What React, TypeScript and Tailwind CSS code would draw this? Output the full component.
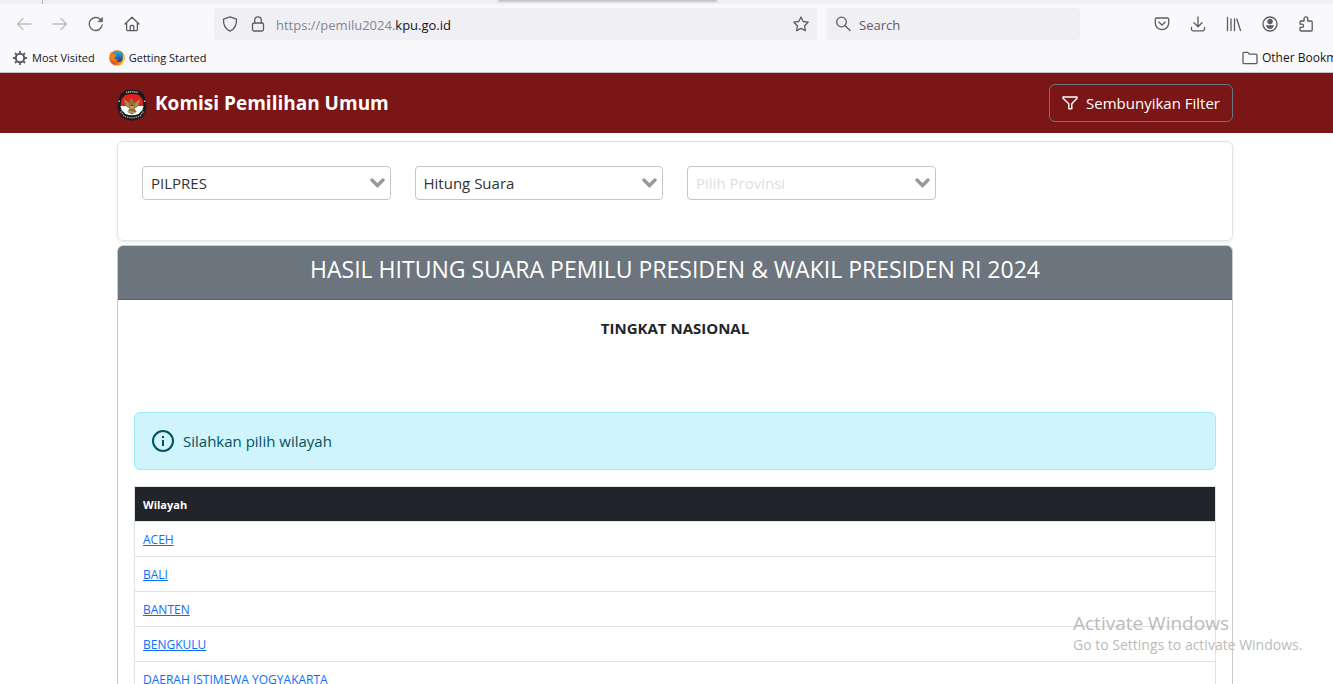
import React from 'react';

interface FilterSelectProps {
  id: string;
  label: string;
  options: string[];
  muted?: boolean;
}

const REGIONS = [
  'ACEH',
  'BALI',
  'BANTEN',
  'BENGKULU',
  'DAERAH ISTIMEWA YOGYAKARTA',
];

const Icon = ({ size = 16, children }: { size?: number; children: React.ReactNode }) => (
  <svg width={size} height={size} viewBox="0 0 16 16" fill="none" stroke="currentColor" strokeWidth="1.3" strokeLinecap="round" strokeLinejoin="round" aria-hidden="true">
    {children}
  </svg>
);

const ToolbarButton = ({ label, disabled, children }: { label: string; disabled?: boolean; children: React.ReactNode }) => (
  <button aria-label={label} disabled={disabled} className="flex h-8 w-9 items-center justify-center text-[#5b5b66] disabled:text-[#bcbcc2]">
    {children}
  </button>
);

const FirefoxLogo = () => (
  <svg width="16" height="16" viewBox="0 0 16 16" aria-hidden="true">
    <defs>
      <linearGradient id="fox" x1="0" y1="0" x2="1" y2="1">
        <stop offset="0" stopColor="#f08a1c" />
        <stop offset="0.55" stopColor="#e5541b" />
        <stop offset="1" stopColor="#f9c22e" />
      </linearGradient>
      <linearGradient id="globe" x1="0" y1="0" x2="0" y2="1">
        <stop offset="0" stopColor="#35b5ea" />
        <stop offset="1" stopColor="#153a78" />
      </linearGradient>
    </defs>
    <circle cx="8" cy="8" r="7.8" fill="url(#fox)" />
    <path d="M3.5 2.2A7.6 7.6 0 0 1 13.6 3c1.2 2.2 1.4 5-.2 7.2-1.6 1.8-4.6 2.2-6.600.8L5 9l2-2.600-2.400-.6z" fill="url(#globe)" />
    <path d="M.6 5.500 1.800 2l1.600 1.700c1-.3 2-.1 2.800.4L7.600 5.600 6 7l-.6 1.400c.8 1.300 2.600 1.200 3.800.5-.4 2.200-3.200 3.200-5.200 1.800C2 9.600.8 7.600.6 5.500z" fill="#ef7f1a" />
    <path d="M13.300 3.200c2.200 2.400 2.800 6 1.200 9-.8 1.400-2 2.500-3.500 3.100 2.600-2.800 3.600-7.600 2.300-12.100z" fill="#fbd13c" />
  </svg>
);

const KpuLogo = () => (
  <svg width="30" height="32" viewBox="0 0 30 32" aria-hidden="true">
    <path d="M8 1.500Q15-.2 22 1.500L26.500 5Q30 12 29.500 20L26 27.500Q20 31.500 15 31.500T4 27.500L.5 20Q0 12 3.500 5z" fill="#17191b" />
    <path d="M8 6Q15 4 22 6L25.500 10 26.500 17H3.500L4.500 10z" fill="#e3211c" />
    <path d="M3.500 17h23L25.500 21 21.500 25Q15 27.500 8.500 25L4.500 21z" fill="#fff" />
    <path d="M9 3.500Q15 2 21 3.500" fill="none" stroke="#b9b9b9" strokeWidth="1.600" strokeDasharray="1.200 .7" />
    <path d="M3.500 22.500 7 27Q15 30.500 23 27L26.500 22.500" fill="none" stroke="#a5a5a5" strokeWidth="1.500" strokeDasharray="1.300 .9" />
    <path d="M2.200 11.500v1.500M27.800 11.500v1.500" stroke="#ddd" strokeWidth="1.200" />
    <path d="m6.500 9 1 6 3 3.500 2 .5-2 4 4.500 2.500 4.500-2.500-2-4 2-.5 3-3.500 1-6-3.500 3-3 1.500-1-3-2-1-1.500 1 .5 3-3-1.500z" fill="#92713d" />
    <path d="m8 12 3.500 3M22 12l-3.500 3M9 15l3 2M21 15l-3 2M11 22.500l8 1.500" stroke="#d9be83" strokeWidth=".8" />
    <path d="M13 15h4v3.500l-2 1.500-2-1.500z" fill="#c9a35a" />
    <path d="M13.500 15.500h3v1.500h-3z" fill="#5b2b1c" />
  </svg>
);

const FilterSelect: React.FC<FilterSelectProps> = ({ id, label, options, muted }) => (
  <div className="relative">
    <select
      id={id}
      aria-label={label}
      className={`block h-[34px] w-full appearance-none rounded border border-[#c6c6c6] bg-white pl-2 pr-8 text-[15px] ${muted ? 'text-[#dedede]' : 'text-[#333]'}`}
    >
      {options.map(option => (
        <option key={option}>{option}</option>
      ))}
    </select>
    <svg className="pointer-events-none absolute right-1.5 top-3" width="15" height="10" viewBox="0 0 15 10" fill="none" aria-hidden="true">
      <path d="m2 2 5.500 5.500L13 2" stroke="#999" strokeWidth="3.400" strokeLinecap="round" />
    </svg>
  </div>
);

const BrowserChrome = () => (
  <div className="shrink-0 border-b border-[#c4c4ca] bg-[#f9f9fb]">
    <div className="flex h-1 bg-[#f0f0f4]">
      <div className="w-[43px] border-r border-[#b4b4ba]" />
      <div className="ml-[456px] h-px w-[217px] bg-[#c4c4c6] shadow-[0_0_2px_1px_#c4c4c6]" />
    </div>
    <div className="flex h-10 items-center pl-1.5 pr-[9px]">
      <ToolbarButton label="Back" disabled>
        <Icon><path d="M15 8H1.500M7 2.500 1.500 8 7 13.500" /></Icon>
      </ToolbarButton>
      <ToolbarButton label="Forward" disabled>
        <Icon><path d="M1 8h13.500M9 2.500 14.500 8 9 13.500" /></Icon>
      </ToolbarButton>
      <ToolbarButton label="Reload">
        <Icon>
          <path d="M14.200 9A6.500 6.500 0 1 1 12.500 3.500" />
          <path d="M14.500 1.500v4.300h-4.300z" fill="currentColor" strokeWidth=".6" />
        </Icon>
      </ToolbarButton>
      <ToolbarButton label="Home">
        <Icon>
          <path d="M1 8 8 1.200 15 8M2.600 6.800V13.500a1.200 1.200 0 0 0 1.200 1.200h8.400a1.200 1.200 0 0 0 1.200-1.200V6.800" />
          <path d="M6.200 14.500v-3.800a1.200 1.200 0 0 1 1.200-1.200h1.200a1.200 1.200 0 0 1 1.200 1.200v3.800" />
        </Icon>
      </ToolbarButton>
      <div className="ml-16 flex h-8 flex-1 items-center rounded bg-[#f0f0f4] px-2 text-[#5b5b66]">
        <Icon><path d="M8 .8 14.500 3.200c.3 4.800-1.500 9.500-6.500 12-5-2.500-6.800-7.200-6.500-12z" /></Icon>
        <span className="ml-3">
          <Icon>
            <rect x="2.500" y="7" width="11" height="8" rx="1.500" />
            <path d="M4.700 7V4.200a3.300 3.300 0 0 1 6.600 0V7" />
          </Icon>
        </span>
        <div className="ml-2.5 flex-1 pt-[3px] text-[13px] text-[#85858c]">
          https://pemilu2024.<span className="text-[#15141a]">kpu.go.id</span>
        </div>
        <button aria-label="Bookmark this page">
          <Icon><path d="m8 1 2.200 4.500 4.900.7-3.500 3.500.8 4.900L8 12.300l-4.400 2.300.8-4.900L.9 6.200l4.900-.7z" /></Icon>
        </button>
      </div>
      <div className="ml-2.5 flex h-8 w-[253px] items-center gap-2 rounded bg-[#f0f0f4] pl-2 text-[#5b5b66]">
        <span className="shrink-0">
          <Icon>
            <circle cx="6.500" cy="6" r="4.800" />
            <path d="m10 9.500 5 5" />
          </Icon>
        </span>
        <input type="search" aria-label="Search" placeholder="Search" className="w-full bg-transparent pt-[3px] text-[13px] placeholder:text-[#5b5b66]" />
      </div>
      <div className="ml-16 flex">
        <ToolbarButton label="Pocket">
          <Icon>
            <path d="M2.500 2h11a1.200 1.200 0 0 1 1.200 1.200V7a6.700 6.700 0 0 1-13.400 0V3.200A1.200 1.200 0 0 1 2.500 2z" />
            <path d="M4.800 6 8 9l3.200-3" />
          </Icon>
        </ToolbarButton>
        <ToolbarButton label="Downloads">
          <Icon><path d="M8 .8v9.700M4 6.800l4 4 4-4M1.500 11.500v1.800a1.500 1.500 0 0 0 1.500 1.500h10a1.500 1.500 0 0 0 1.500-1.500v-1.800" /></Icon>
        </ToolbarButton>
        <ToolbarButton label="Library">
          <Icon><path d="M1.500 1.500v13M5 3v11.500M8.500 3v11.500M10.800 3l3.700 11.500" /></Icon>
        </ToolbarButton>
        <ToolbarButton label="Account">
          <Icon>
            <circle cx="8" cy="8" r="7" />
            <circle cx="8" cy="5.600" r="2.100" fill="currentColor" />
            <path d="M4.500 9.500h7c-.2 2.200-1.600 3.200-3.500 3.200s-3.300-1-3.500-3.200z" fill="currentColor" strokeWidth=".5" />
          </Icon>
        </ToolbarButton>
        <ToolbarButton label="Extensions">
          <Icon><path d="M6 5V2.700a1.900 1.900 0 0 1 3.800 0V5h3.400a1 1 0 0 1 1 1v8a1 1 0 0 1-1 1H3a1 1 0 0 1-1-1v-2.600h2a1.600 1.600 0 0 0 0-3.200H2V6a1 1 0 0 1 1-1z" /></Icon>
        </ToolbarButton>
      </div>
    </div>
    <div className="flex h-7 items-center gap-3.5 overflow-hidden whitespace-nowrap pl-3 text-[11px] text-[#15141a]">
      <a href="#" className="flex items-center gap-1">
        <svg width="16" height="16" viewBox="0 0 16 16" fill="none" stroke="#5b5b66" aria-hidden="true">
          <circle cx="8" cy="8" r="4.200" strokeWidth="2" />
          <path d="M8 1v2.500M8 12.500V15M1 8h2.500M12.500 8H15M3 3l1.800 1.800M11.200 11.200 13 13M13 3l-1.800 1.800M4.800 11.200 3 13" strokeWidth="1.800" />
        </svg>
        Most Visited
      </a>
      <a href="#" className="flex items-center gap-1">
        <FirefoxLogo />
        Getting Started
      </a>
      <a href="#" className="ml-auto flex w-[91px] shrink-0 items-center gap-1">
        <span className="shrink-0 text-[#5b5b66]">
          <Icon><path d="M1 12.500v-9A1.200 1.200 0 0 1 2.200 2.300h3.600l1.500 1.900h6.500A1.200 1.200 0 0 1 15 5.400v7.100a1.200 1.200 0 0 1-1.200 1.200H2.200A1.200 1.200 0 0 1 1 12.500z" /></Icon>
        </span>
        <span className="text-[12px]">Other Bookm</span>
      </a>
    </div>
  </div>
);

const Header = () => (
  <header className="bg-[#7a1616] pl-[17px] text-white">
    <div className="mx-auto flex h-[60px] max-w-[1116px] items-center justify-between">
      <a href="#" className="flex items-center gap-2 text-[19px] font-bold">
        <span className="pt-1">
          <KpuLogo />
        </span>
        Komisi Pemilihan Umum
      </a>
      <button className="flex h-[38px] items-center gap-2 rounded-md border border-[#6c757d] px-3 text-[15px]">
        <svg width="16" height="16" viewBox="0 0 16 16" fill="none" stroke="currentColor" strokeWidth="1.400" strokeLinejoin="round" aria-hidden="true">
          <path d="M1 2h14v1.300l-5.200 5.500v4.900H6.800V8.800L1 3.300z" />
        </svg>
        Sembunyikan Filter
      </button>
    </div>
  </header>
);

export default function App() {
  return (
    <div className="relative flex h-screen flex-col overflow-hidden bg-white font-['Open_Sans','Noto_Sans',sans-serif] text-[#212529]">
      <BrowserChrome />
      <Header />
      <main className="pl-[17px] pt-2">
        <div className="mx-auto max-w-[1116px]">
          <form className="grid h-[100px] grid-cols-4 gap-6 rounded-md border border-[#dee2e6] p-6 shadow-[0_2px_4px_rgba(0,0,0,0.075)]">
            <FilterSelect id="pemilihan" label="Jenis Pemilihan" options={['PILPRES']} />
            <FilterSelect id="tahapan" label="Tahapan" options={['Hitung Suara']} />
            <FilterSelect id="provinsi" label="Provinsi" options={['Pilih Provinsi']} muted />
          </form>

          <section className="mt-1 rounded-md border border-[#c9cbcd]">
            <h1 className="h-[54px] rounded-t-[5px] border-b border-[#596068] bg-[#6c757d] pt-[7px] text-center text-[23px] leading-8 text-white">
              HASIL HITUNG SUARA PEMILU PRESIDEN &amp; WAKIL PRESIDEN RI 2024
            </h1>
            <div className="p-4">
              <h2 className="h-24 text-center text-[15px] font-bold leading-6">TINGKAT NASIONAL</h2>

              <div role="alert" className="flex h-[58px] items-center gap-2 rounded-md border border-[#9eeaf9] bg-[#cff4fc] px-4 text-[15px] text-[#055160]">
                <svg width="24" height="24" viewBox="0 0 24 24" fill="none" stroke="currentColor" strokeWidth="2" aria-hidden="true">
                  <circle cx="12" cy="12" r="10" />
                  <path d="M12 11v6M12 7v2" />
                </svg>
                Silahkan pilih wilayah
              </div>

              <table className="mt-4 w-full border-collapse text-left text-[12px] leading-[18px]">
                <thead>
                  <tr>
                    <th className="border border-[#dee2e6] bg-[#212529] px-2 pb-[7px] pt-[9px] text-[11px] font-bold text-white">Wilayah</th>
                  </tr>
                </thead>
                <tbody>
                  {REGIONS.map(region => (
                    <tr key={region}>
                      <td className="border border-[#dee2e6] px-2 pb-[7px] pt-[9px]">
                        <a href="#" className="text-[#0d6efd] underline">{region}</a>
                      </td>
                    </tr>
                  ))}
                </tbody>
              </table>
            </div>
          </section>
        </div>
      </main>

      <div className="pointer-events-none absolute bottom-[29px] right-6 w-[236px] text-[#bbb]">
        <p className="text-[19px] leading-6">Activate Windows</p>
        <p className="text-[14px] leading-5">Go to Settings to activate Windows.</p>
      </div>
    </div>
  );
}
